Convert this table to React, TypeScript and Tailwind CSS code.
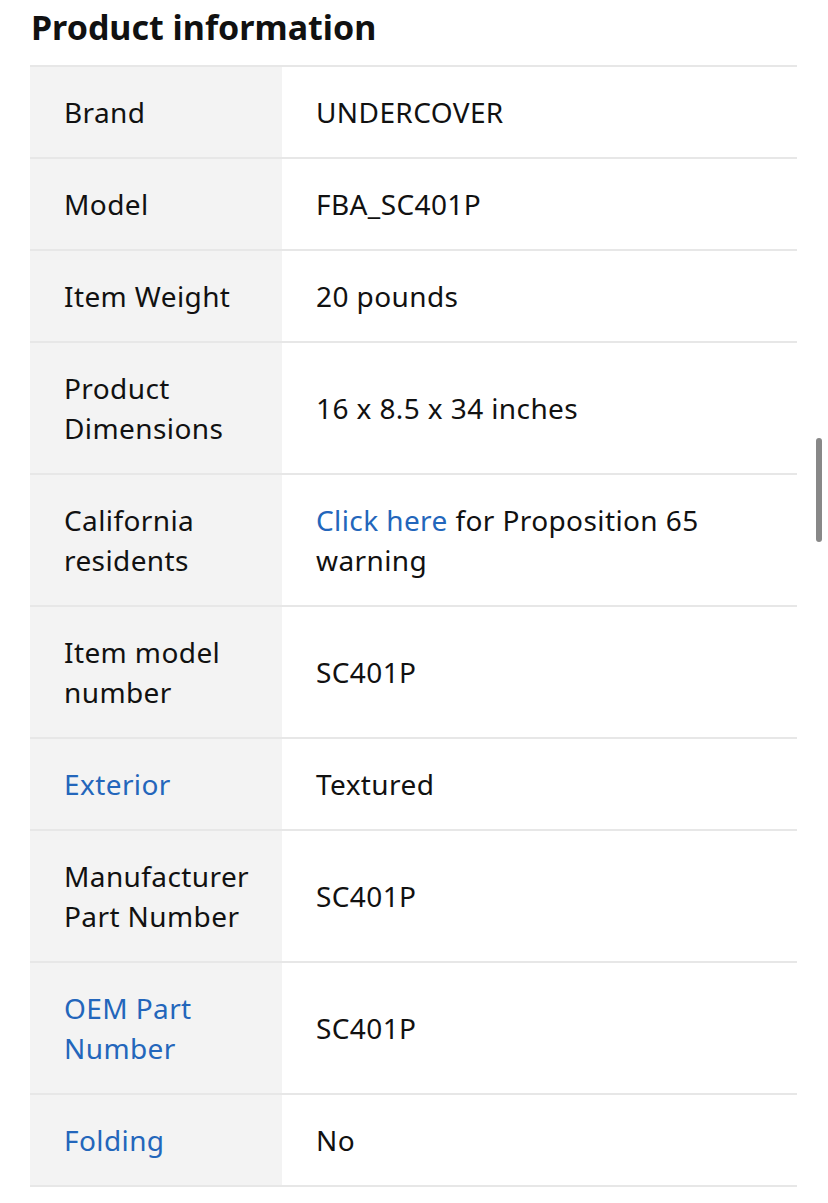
const rows: { label: string; value: React.ReactNode; labelLink?: boolean }[] = [
  { label: "Brand", value: "UNDERCOVER" },
  { label: "Model", value: "FBA_SC401P" },
  { label: "Item Weight", value: "20 pounds" },
  { label: "Product Dimensions", value: "16 x 8.5 x 34 inches" },
  {
    label: "California residents",
    value: (
      <>
        <a className="text-[#2366bb]">Click here</a> for Proposition 65 warning
      </>
    ),
  },
  { label: "Item model number", value: "SC401P" },
  { label: "Exterior", value: "Textured", labelLink: true },
  { label: "Manufacturer Part Number", value: "SC401P" },
  { label: "OEM Part Number", value: "SC401P", labelLink: true },
  { label: "Folding", value: "No", labelLink: true },
];

export default function App() {
  return (
    <div className="relative min-h-[1203px] bg-white font-['Noto_Sans',sans-serif] text-[#111]">
      <div className="pl-[30px] pr-[31px] pt-[4px]">
        <h2 className="pl-px text-[34px] font-bold leading-[46px]">Product information</h2>
        <div className="mt-[15px] border-b-2 border-[#e7e7e7]">
          {rows.map((r) => (
            <div key={r.label} className="flex border-t-2 border-[#e7e7e7] text-[28px] leading-[40px] tracking-[0.4px]">
              <div
                className={`w-[252px] shrink-0 bg-[#f3f3f3] py-[25px] pl-[34px] pr-[30px] ${
                  r.labelLink ? "text-[#2366bb]" : ""
                }`}
              >
                {r.label}
              </div>
              <div className="flex flex-1 items-center py-[25px] pl-[34px] pr-[20px]">
                <p>{r.value}</p>
              </div>
            </div>
          ))}
        </div>
      </div>
      <div className="absolute right-[6px] top-[438px] h-[104px] w-[6px] rounded-full bg-[#888]" />
    </div>
  );
}
